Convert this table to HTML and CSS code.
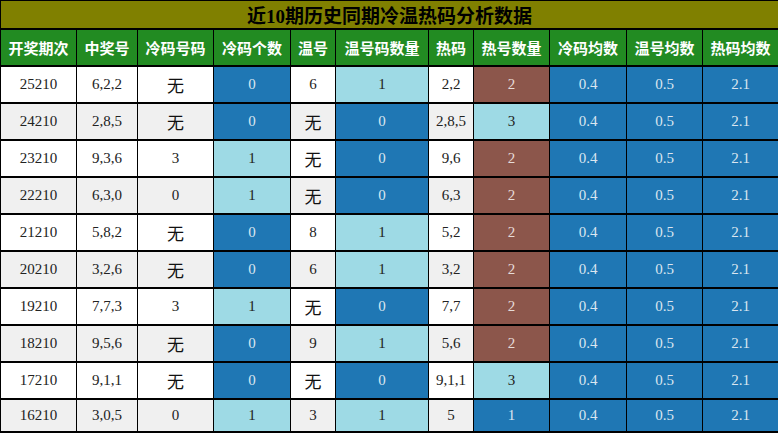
FILE: index.html
```html
<!DOCTYPE html>
<html lang="zh">
<head>
<meta charset="utf-8">
<link rel="stylesheet" href="styles.css">
</head>
<body>
<table class="grid">
<colgroup>
<col class="c76"><col class="c61"><col class="c76"><col class="c77"><col class="c45"><col class="c93"><col class="c45"><col class="c76"><col class="c77"><col class="c76"><col class="c76">
</colgroup>
<thead>
<tr class="title"><th colspan="11">近10期历史同期冷温热码分析数据</th></tr>
<tr class="head"><th>开奖期次</th><th>中奖号</th><th>冷码号码</th><th>冷码个数</th><th>温号</th><th>温号码数量</th><th>热码</th><th>热号数量</th><th>冷码均数</th><th>温号均数</th><th>热码均数</th></tr>
</thead>
<tbody>
<tr><td>25210</td><td>6,2,2</td><td class="cjk">无</td><td class="dk">0</td><td>6</td><td class="lt">1</td><td>2,2</td><td class="br">2</td><td class="dk">0.4</td><td class="dk">0.5</td><td class="dk">2.1</td></tr>
<tr class="alt"><td>24210</td><td>2,8,5</td><td class="cjk">无</td><td class="dk">0</td><td class="cjk">无</td><td class="dk">0</td><td>2,8,5</td><td class="lt">3</td><td class="dk">0.4</td><td class="dk">0.5</td><td class="dk">2.1</td></tr>
<tr><td>23210</td><td>9,3,6</td><td>3</td><td class="lt">1</td><td class="cjk">无</td><td class="dk">0</td><td>9,6</td><td class="br">2</td><td class="dk">0.4</td><td class="dk">0.5</td><td class="dk">2.1</td></tr>
<tr class="alt"><td>22210</td><td>6,3,0</td><td>0</td><td class="lt">1</td><td class="cjk">无</td><td class="dk">0</td><td>6,3</td><td class="br">2</td><td class="dk">0.4</td><td class="dk">0.5</td><td class="dk">2.1</td></tr>
<tr><td>21210</td><td>5,8,2</td><td class="cjk">无</td><td class="dk">0</td><td>8</td><td class="lt">1</td><td>5,2</td><td class="br">2</td><td class="dk">0.4</td><td class="dk">0.5</td><td class="dk">2.1</td></tr>
<tr class="alt"><td>20210</td><td>3,2,6</td><td class="cjk">无</td><td class="dk">0</td><td>6</td><td class="lt">1</td><td>3,2</td><td class="br">2</td><td class="dk">0.4</td><td class="dk">0.5</td><td class="dk">2.1</td></tr>
<tr><td>19210</td><td>7,7,3</td><td>3</td><td class="lt">1</td><td class="cjk">无</td><td class="dk">0</td><td>7,7</td><td class="br">2</td><td class="dk">0.4</td><td class="dk">0.5</td><td class="dk">2.1</td></tr>
<tr class="alt"><td>18210</td><td>9,5,6</td><td class="cjk">无</td><td class="dk">0</td><td>9</td><td class="lt">1</td><td>5,6</td><td class="br">2</td><td class="dk">0.4</td><td class="dk">0.5</td><td class="dk">2.1</td></tr>
<tr><td>17210</td><td>9,1,1</td><td class="cjk">无</td><td class="dk">0</td><td class="cjk">无</td><td class="dk">0</td><td>9,1,1</td><td class="lt">3</td><td class="dk">0.4</td><td class="dk">0.5</td><td class="dk">2.1</td></tr>
<tr class="alt last"><td>16210</td><td>3,0,5</td><td>0</td><td class="lt">1</td><td>3</td><td class="lt">1</td><td>5</td><td class="dk">1</td><td class="dk">0.4</td><td class="dk">0.5</td><td class="dk">2.1</td></tr>
</tbody>
</table>
</body>
</html>
```
FILE: styles.css
```css
html, body {
  margin: 0;
  padding: 0;
  background: #ffffff;
}
.grid {
  width: 778px;
  border-collapse: collapse;
  table-layout: fixed;
  font-family: "Liberation Serif", "Noto Sans CJK SC", serif;
  font-size: 15px;
  color: #222;
}
.c76 { width: 76px; }
.c61 { width: 61px; }
.c77 { width: 77px; }
.c45 { width: 45px; }
.c93 { width: 93px; }
.grid th, .grid td {
  border: 1px solid #000;
  border-width: 2px 1px;
  padding: 0;
  text-align: center;
  vertical-align: middle;
}
.title th {
  height: 27px;
  background: #808000;
  color: #000;
  font-weight: bold;
  font-size: 19px;
  font-family: "Liberation Serif", "Noto Sans CJK SC", sans-serif;
  border-width: 1px 1px 2px 1px;
}
.head th {
  height: 35px;
  background: #228b22;
  color: #fff;
  font-family: "Noto Sans CJK SC", sans-serif;
  font-weight: bold;
  font-size: 15px;
}
.grid td {
  height: 35px;
  background: #ffffff;
}
.grid tr.alt td {
  background: #f0f0f0;
}
.grid td.cjk {
  font-family: "Noto Sans CJK SC", sans-serif;
  font-size: 17px;
  color: #111;
}
.grid td.dk, .grid tr.alt td.dk {
  background: #1f77b4;
  color: #dbe6f0;
}
.grid td.lt, .grid tr.alt td.lt {
  background: #9edae5;
}
.grid td.br, .grid tr.alt td.br {
  background: #8c564b;
  color: #e6dcd8;
}
.grid tr.last td {
  height: 31px;
}
```
